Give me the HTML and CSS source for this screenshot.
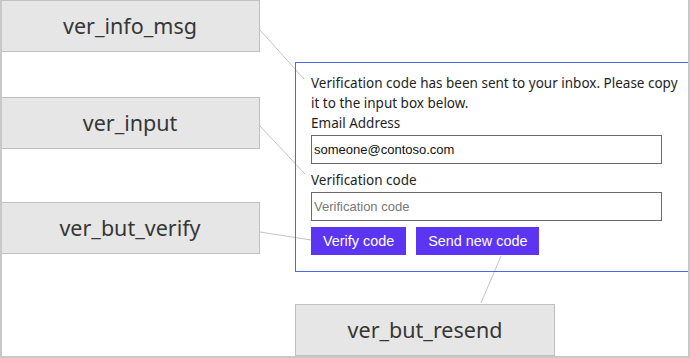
FILE: index.html
```html
<!DOCTYPE html>
<html lang="en">
<head>
    <meta charset="UTF-8">
    <title>Verification control parts</title>
    <link rel="stylesheet" href="styles.css">
</head>
<body>

<div class="canvas">
    <!-- connector lines between callouts and the form -->
    <svg class="connectors" width="690" height="358" viewBox="0 0 690 358">
        <line x1="260" y1="30" x2="304" y2="79" />
        <line x1="260" y1="126" x2="305" y2="174" />
        <line x1="260" y1="232" x2="311" y2="240" />
        <line x1="501" y1="256" x2="481" y2="303" />
    </svg>

    <div class="callout callout-info">ver_info_msg</div>
    <div class="callout callout-input">ver_input</div>
    <div class="callout callout-verify">ver_but_verify</div>
    <div class="callout callout-resend">ver_but_resend</div>

    <div class="panel">
        <p class="info-msg">Verification code has been sent to your inbox. Please copy it to the input box below.</p>
        <label for="email">Email Address</label>
        <input type="text" id="email" value="someone@contoso.com">
        <label for="code">Verification code</label>
        <input type="text" id="code" placeholder="Verification code">
        <div class="buttons">
            <button class="btn">Verify code</button>
            <button class="btn">Send new code</button>
        </div>
    </div>
</div>

</body>
</html>
```

FILE: styles.css
```css
body {
    margin: 0;
    background: #ffffff;
    font-family: "Noto Sans", sans-serif;
}
.canvas {
    position: relative;
    width: 690px;
    height: 358px;
    box-sizing: border-box;
    border-left: 2px solid #c8c8c8;
    border-right: 2px solid #c8c8c8;
    border-bottom: 2px solid #c8c8c8;
    overflow: hidden;
}
.connectors {
    position: absolute;
    left: -2px;
    top: 0;
}
.connectors line {
    stroke: #c4c4c4;
    stroke-width: 1;
}
/* callout boxes */
.callout {
    position: absolute;
    width: 260px;
    height: 52px;
    box-sizing: border-box;
    background: #e6e6e6;
    border: 1px solid #c0c0c0;
    color: #363636;
    font-size: 21.5px;
    display: flex;
    align-items: center;
    justify-content: center;
    padding-bottom: 2px;
}
.callout-info { left: -2px; top: 0; }
.callout-input { left: -2px; top: 97px; }
.callout-verify { left: -2px; top: 202px; }
.callout-resend { left: 293px; top: 304px; }
/* the form */
.panel {
    position: absolute;
    left: 293px;
    top: 62px;
    width: 420px;
    box-sizing: border-box;
    border: 1px solid #4a6ae0;
    padding: 10px 36px 16px 15px;
    display: flex;
    flex-direction: column;
    align-items: flex-start;
    font-size: 13.5px;
    line-height: 20px;
    color: #1e1e1e;
}
.info-msg {
    margin: 0;
    width: 372px;
}
.panel label {
    display: block;
}
.panel input {
    width: 351px;
    height: 29px;
    box-sizing: border-box;
    margin: 2px 0 6px;
    padding: 0 2px;
    border: 1px solid #6b6b6b;
    font-family: "Liberation Sans", Arial, sans-serif;
    font-size: 13px;
    color: #111;
    outline: none;
}
.panel input::placeholder {
    color: #777;
}
.buttons {
    display: flex;
    gap: 10px;
}
.btn {
    height: 28px;
    padding: 0 12px;
    border: none;
    background: #5b35f2;
    color: #ffffff;
    font-family: "Liberation Sans", Arial, sans-serif;
    font-size: 14.4px;
    cursor: pointer;
}
```
